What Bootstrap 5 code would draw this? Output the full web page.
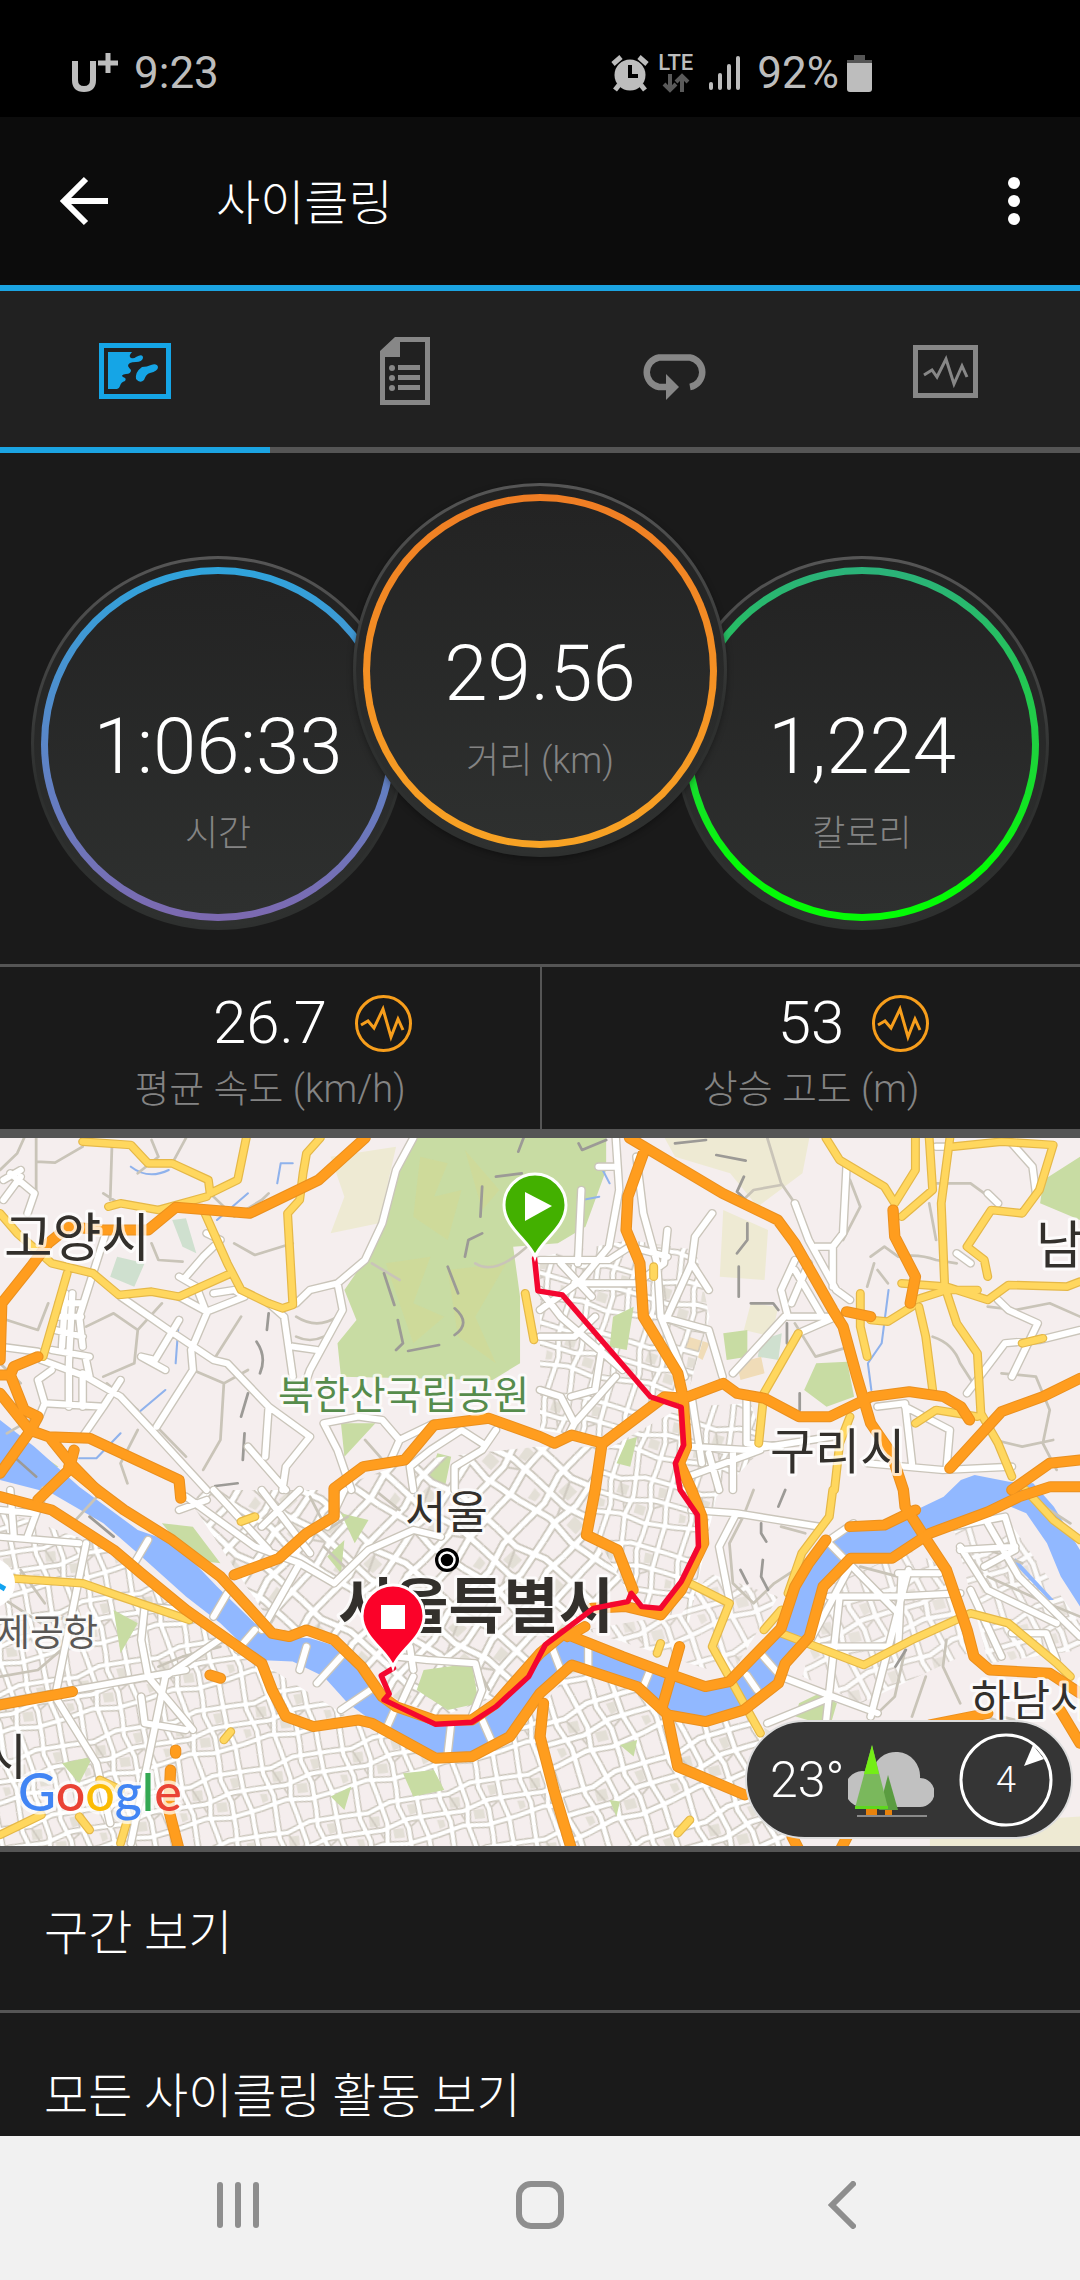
<!DOCTYPE html>
<html lang="ko">
<head>
<meta charset="utf-8">
<meta name="viewport" content="width=device-width, initial-scale=1">
<title>사이클링</title>
<link rel="stylesheet" href="https://cdn.jsdelivr.net/npm/bootstrap@5.3.0/dist/css/bootstrap.min.css">
<style>
  body { background: #1a1a1a; color: #fff; font-family: Roboto, "Noto Sans CJK KR", sans-serif; font-weight: 300; }
  svg { display: block; flex: none; }
  .phone-status { height: 117px; padding: 0 208px 14px 70px; background: #000; color: #bdbdbd; font-size: 44px; font-weight: 400; line-height: 1; }
  .lte-label { font-size: 22px; line-height: 20px; font-weight: 500; }
  .app-header { height: 174px; padding: 0 36px; background: #0c0c0c; border-bottom: 6px solid #1ba4e2; }
  .app-title { font-size: 48px; line-height: 60px; font-weight: 300; margin-left: 84px; padding-top: 6px; }
  .icon-btn { padding: 0; border: 0; background: none; color: inherit; display: flex; align-items: center; justify-content: center; }
  .tab-strip { background: #212121; }
  .tab-strip a { height: 162px; border-bottom: 6px solid #555; color: #878787; display: flex; align-items: center; justify-content: center; padding-top: 4px; }
  .tab-strip a.active { color: #15a5e6; border-color: #1ba4e2; }
  .dials { padding: 30px 0 34px; }
  .dial { width: 374px; height: 374px; border-radius: 50%; border: 3px solid transparent; flex: none; padding-top: 2px;
    background: linear-gradient(#212121, #2f3130) padding-box, linear-gradient(#565656, #2e302f 60%) border-box; }
  .dial-side { margin-top: 73px; }
  .dial-main { margin: 0 -52px; z-index: 1; box-shadow: 0 2px 6px rgba(0,0,0,.35); }
  .dial-ring { width: 354px; height: 354px; border-radius: 50%; border: 7px solid transparent; padding-top: 126px; }
  .ring-time { background: linear-gradient(#232323, #2e302f) padding-box, linear-gradient(#2fa4dc, #5a86c8 50%, #7d69b0) border-box; }
  .ring-distance { background: linear-gradient(#232323, #2e302f) padding-box, linear-gradient(#ef7d24, #f8a324) border-box; }
  .ring-energy { background: linear-gradient(#232323, #2e302f) padding-box, linear-gradient(#2bb27a, #1fd03f 50%, #04fb06 85%) border-box; }
  .dial-value { font-size: 78px; line-height: 94px; }
  .caption-text { font-size: 36px; line-height: 48px; color: #848484; }
  .dial .caption-text { margin-top: 16px; }
  .stat-cell .caption-text { font-size: 38px; margin-top: 6px; }
  .stat-row { border-top: 3px solid #555; border-bottom: 9px solid #555; }
  .stat-cell { height: 162px; padding-top: 20px; }
  .stat-cell + .stat-cell { border-left: 2px solid #555; }
  .stat-value { font-size: 60px; line-height: 72px; }
  .stat-icon svg { margin-left: 28px; }
  .map-box { border-bottom: 6px solid #555; }
  .map-box > svg { width: 100%; height: auto; }
  .map-label { font-family: "Noto Sans CJK KR", sans-serif; font-weight: 400; fill: #33302c; stroke: #fff; stroke-width: 6px; stroke-opacity: .75; paint-order: stroke; stroke-linejoin: round; }
  .brand-label { font-family: Lato, sans-serif; font-weight: 500; font-size: 52px; stroke: #fff; stroke-width: 7px; stroke-opacity: .7; paint-order: stroke; stroke-linejoin: round; }
  .line-set { fill: none; stroke-linecap: round; stroke-linejoin: round; }
  .weather-pill { right: 7px; bottom: 7px; height: 119px; width: 328px; border-radius: 60px; background: #353535; border: 2px solid #ddd; padding: 0 18px 0 23px; color: #fff; }
  .weather-temp { font-size: 50px; line-height: 60px; }
  .wind-dial { width: 94px; height: 94px; }
  .wind-dial span { font-size: 36px; line-height: 94px; }
  .more-item { height: 161px; padding: 6px 44px 0; background: #1a1a1a; color: #fff; border-bottom: 3px solid #555; font-size: 48px; }
  .more-item:last-child { border-bottom: 0; }
  .system-nav { height: 144px; background: #f1f1f1; color: #8e8e8e; }
  .system-nav .icon-btn { width: 28%; height: 100%; padding-bottom: 6px; }
</style>
</head>
<body>

<header>
  <div class="phone-status d-flex align-items-end justify-content-between">
    <div class="d-flex align-items-center gap-3 pb-2">
      <svg width="48" height="42" viewBox="0 0 48 42" fill="none" stroke="currentColor" stroke-width="6"><path d="M5 9v19q0 9 9 9t9-9V9"/><path d="M28 11h20M38 1v20" stroke-width="5"/></svg>
      <span>9:23</span>
    </div>
    <div class="d-flex align-items-center pb-2">
      <svg width="40" height="40" viewBox="0 0 40 40"><circle cx="20" cy="22" r="15.500" fill="currentColor"/><path d="M9 32l-4 5M31 32l4 5M3 11l8-7M37 11l-8-7" stroke="currentColor" stroke-width="5"/><path d="M20 12v11h8" stroke="#000" stroke-width="4" fill="none"/></svg>
      <div class="d-flex flex-column align-items-center mx-2">
        <span class="lte-label">LTE</span>
        <svg width="28" height="20" viewBox="0 0 28 20" fill="none" stroke="#5a5a5a" stroke-width="4"><path d="M8 1v16M2 11l6 6 6-6M20 19V3M14 9l6-6 6 6"/></svg>
      </div>
      <svg class="mx-2" width="32" height="36" viewBox="0 0 32 36" fill="currentColor"><rect y="27" width="4" height="8" rx="2"/><rect x="9" y="18" width="4" height="17" rx="2"/><rect x="18" y="9" width="4" height="26" rx="2"/><rect x="27" y="1" width="4" height="34" rx="2"/></svg>
      <span class="ms-2 me-2">92%</span>
      <svg width="25" height="37" viewBox="0 0 25 37"><path d="M7 0h11v5h7v5H0V5h7z" fill="#555"/><path d="M0 8h25v26q0 3-3 3H3q-3 0-3-3z" fill="currentColor"/></svg>
    </div>
  </div>

  <div class="app-header d-flex align-items-center">
    <button class="icon-btn" type="button" aria-label="뒤로">
      <svg width="96" height="60" viewBox="0 0 96 60" fill="none" stroke="currentColor" stroke-width="6"><path d="M72 30H28M50 8L28 30l22 22"/></svg>
    </button>
    <h1 class="app-title mb-0">사이클링</h1>
    <button class="icon-btn ms-auto" type="button" aria-label="메뉴">
      <svg width="60" height="60" viewBox="0 0 60 60" fill="currentColor"><circle cx="30" cy="12" r="6"/><circle cx="30" cy="30" r="6"/><circle cx="30" cy="48" r="6"/></svg>
    </button>
  </div>
</header>

<nav class="tab-strip row row-cols-4 g-0" aria-label="활동 보기">
  <a class="col active" href="#map" aria-label="지도"><svg width="72" height="56" viewBox="0 0 72 56"><rect x="2.500" y="2.500" width="67" height="51" fill="none" stroke="currentColor" stroke-width="5"/><path d="M9 9h24q-4 4-1 6 3 1 5-1 7-4 7 1-1 4-7 4-8 0-8 4 1 2 3 4 0 4-5 4-6 1-3 3 4 1 2 4-4 1-5 5-1 3-3 3H9zM37 36q-1-7 6-12 5 0 9-2 6-2 7 2 0 4-8 6-4 1-6 7-4 4-8-1z" fill="currentColor"/></svg></a>
  <a class="col" href="#stats" aria-label="통계"><svg width="50" height="68" viewBox="0 0 50 68" fill="currentColor"><path fill-rule="evenodd" d="M15 0h35v68H0V14zM20 5v15H5v43h40V5z"/><circle cx="12" cy="31" r="3"/><circle cx="12" cy="41" r="3"/><circle cx="12" cy="51" r="3"/><path d="M18 28h22v5H18zM18 38h22v5H18zM18 48h22v5H18z"/></svg></a>
  <a class="col" href="#laps" aria-label="랩"><svg width="68" height="58" viewBox="0 -12 68 58"><path d="M27 33H18A15 15 0 0 1 18 3.500H49A15 15 0 0 1 49 33" fill="none" stroke="currentColor" stroke-width="6.500"/><path d="M25 20l13 13-13 13z" fill="currentColor"/></svg></a>
  <a class="col" href="#charts" aria-label="차트"><svg width="65" height="53" viewBox="0 0 65 53" fill="none" stroke="currentColor"><rect x="2.500" y="2.500" width="60" height="48" stroke-width="5"/><path d="M11 30l8-5 5 7 9-18 8 25 8-18 5 11" stroke-width="3"/></svg></a>
</nav>

<main>
  <section class="dials d-flex justify-content-center text-center overflow-hidden">
    <div class="dial dial-side d-flex align-items-center justify-content-center">
      <div class="dial-ring ring-time"><div class="dial-value">1:06:33</div><div class="caption-text">시간</div></div>
    </div>
    <div class="dial dial-main d-flex align-items-center justify-content-center">
      <div class="dial-ring ring-distance"><div class="dial-value">29.56</div><div class="caption-text">거리 (km)</div></div>
    </div>
    <div class="dial dial-side d-flex align-items-center justify-content-center">
      <div class="dial-ring ring-energy"><div class="dial-value">1,224</div><div class="caption-text">칼로리</div></div>
    </div>
  </section>

  <section class="stat-row row row-cols-2 g-0 text-center">
    <div class="stat-cell col">
      <div class="row g-0 align-items-center">
        <div class="col"></div>
        <div class="col-auto stat-value">26.7</div>
        <div class="col stat-icon"><svg width="57" height="57" viewBox="0 0 57 57" fill="none" stroke="#f79e1c" stroke-width="3"><circle cx="28.500" cy="28.500" r="27"/><path d="M6 30l7-4 6 7 9-19 8 28 7-18 5 11"/></svg></div>
      </div>
      <div class="caption-text">평균 속도 (km/h)</div>
    </div>
    <div class="stat-cell col">
      <div class="row g-0 align-items-center">
        <div class="col"></div>
        <div class="col-auto stat-value">53</div>
        <div class="col stat-icon"><svg width="57" height="57" viewBox="0 0 57 57" fill="none" stroke="#f79e1c" stroke-width="3"><circle cx="28.500" cy="28.500" r="27"/><path d="M6 30l7-4 6 7 9-19 8 28 7-18 5 11"/></svg></div>
      </div>
      <div class="caption-text">상승 고도 (m)</div>
    </div>
  </section>

  <section class="map-box position-relative" id="map">
    <svg viewBox="0 0 1080 708" role="img" aria-label="서울 라이딩 경로 지도">
      <defs>
        <path id="tile-lines" d="M0 40L60 48 130 30 240 40M0 98L90 108 170 92 240 98M0 160L80 150 150 165 240 160M40 0L34 60 48 130 40 200M100 0L108 90 94 150 100 200M158 0L150 50 165 120 158 200M212 0L206 98 216 160 212 200"/>
        <pattern id="blocks" width="240" height="200" patternUnits="userSpaceOnUse"><g fill="none"><path d="M60 60l30 4-4 30-30-4zM120 112l30 4-2 28-30-4zM176 50l22 2-2 28-18 2zM10 116l20 4v20l-18 4z" fill="#e3dfd6"/><use href="#tile-lines" stroke="#c9c4b9" stroke-width="20"/><path d="M60 48L94 150M165 120L206 98" stroke="#cfcac0" stroke-width="5"/><use href="#tile-lines" stroke="#fff" stroke-width="12"/></g></pattern>
        <pattern id="blocks-a" href="#blocks" patternTransform="rotate(-14)"/>
        <pattern id="blocks-b" href="#blocks" patternTransform="rotate(-22) scale(1.100)"/>
        <pattern id="blocks-c" href="#blocks" patternTransform="rotate(38) scale(1.300)"/>
        <pattern id="blocks-d" href="#blocks" patternTransform="rotate(12)"/>
        <g id="lanes-gray">
          <path d="M105 24V180L80 260M0 120L50 70 70 24M105 95L160 98 240 50M325 50L320 210M440 30L460 80 400 130M540 24L500 100M610 190L680 260 760 210 780 190M680 340L740 375 850 340M440 340L460 390 530 395M360 230L300 190M20 570L110 600 140 520M250 590L330 550 400 600 390 700 300 740M400 600L470 520M560 720L650 760 720 720M650 760L640 930 590 1020M455 890L540 980M400 840L310 760M0 700L60 760M20 910L120 850M1080 400L1160 450M1380 400Q1440 440 1540 340M700 560L620 690M860 560Q920 600 980 560M860 620Q900 640 940 620M1060 930L1120 1000M400 900L350 1000 370 1060"/>
          <path transform="translate(1568 0)" d="M660 24L700 160 740 220M700 165L620 180 580 220M900 150L930 230 880 330M1130 220L1150 330M1040 380Q1100 370 1150 390L1210 400M960 380L1000 350 1040 380M970 400L950 470M980 420L1010 460M1150 160L1250 160 1330 220M740 580L800 680 900 650M1140 620Q1200 640 1220 700L1270 780M1340 730L1440 740 1480 840 1460 940 1500 1020M1300 530L1380 540 1480 520 1568 560M1320 930L1400 950 1490 930"/>
          <path transform="translate(0 1080)" d="M0 320L120 400 200 380M60 240L130 340M300 0L220 90M460 530L530 500 640 470M0 560L110 540 200 460M900 20L950 120 1010 80M1100 10L1160 60M1010 240L940 170M1230 500L1380 520 1420 600"/>
          <path transform="translate(1568 1080)" d="M590 80L550 160 560 280 620 340 680 280 740 240M620 0L590 80M700 110L770 130M930 230L1040 260M1060 480L1030 620 970 680M1180 450L1170 530 1220 640M1120 560L1080 680M1270 670L1400 720M1300 260L1450 330 1568 380M1280 170L1400 220M1450 40L1540 100M1340 680L1420 700"/>
        </g>
        <g id="lanes-white">
          <path d="M1200 24L1150 120 1110 280 1060 390 980 460 900 480 860 520M980 460L995 540 900 720 880 780M780 520L825 560 850 740M350 500L490 600 620 690 660 700 780 830 900 920M600 550L555 660 560 720 455 890M120 690L250 740 350 800 440 900 600 1080M30 130L100 190 80 250M10 150L60 120M10 210L60 140M310 300L270 430 230 560 240 650M0 650L110 665M520 570L450 690 410 680 480 720M940 880L1040 860 1110 870 1160 930 1260 880M940 880L980 960 1020 1080M720 950L830 1080M780 830L770 980M900 920L830 1010 820 1080M850 650L920 660M600 310L640 330 590 380 540 440M520 440L570 470 600 550M520 500L600 545 710 500M620 490L680 480 710 500M160 600L240 620M190 490L180 650M210 490L200 700M170 520H240M160 560H235M150 660L260 680M150 720L110 750 130 820 300 830 350 750M250 690L260 740M200 700V830M240 730V830M130 820L110 870M300 830L240 920M1160 930L1130 1000M1200 1080L1190 1010 1250 960 1340 900 1400 940M1320 1080V1010L1400 960 1440 900"/>
          <path transform="translate(1568 0)" d="M220 24L230 180 200 350 120 450 0 540M280 80L300 250 340 400 350 560 420 740M0 390H200L260 350 370 380M0 480L60 560 240 720M170 110H220M500 250L450 320 440 400 370 560M370 300L360 400 280 460 100 460M440 400L490 480M350 560L490 600 530 740M740 220L780 330 860 480 900 510M890 110L880 310 850 350 800 350M850 350V470M740 390L700 480 720 560 850 560M710 560L560 730M860 560L750 610M740 420L820 560M780 400L730 520M1150 50H1190M1370 40L1430 110 1440 190M1250 400L1210 370M1330 510L1360 540 1445 580 1370 740M1568 600L1450 630 1350 640 1240 790M1300 190L1330 220M120 180L110 400M60 400L150 500M0 620H100L160 560M0 780L60 800 100 880M220 740L100 880 80 920M180 650L160 780 90 800M440 800L470 1000M600 800V940L700 950M440 950L600 960 850 920M430 1040L640 960M490 970L520 1080M560 960V1080M980 830L1060 820 1080 1000M1060 830L1190 900 1180 1020M950 1000L1170 1020 1370 1010"/>
          <path transform="translate(0 1080)" d="M540 20L740 170 870 220 970 280M620 0L780 180M760 0L900 190M600 30L520 60M430 150L390 220M660 310L620 380M740 420L690 480M890 470L870 540M990 500L920 580M1090 590L990 660M1150 650L1120 720M1310 700L1300 790M1400 690L1430 760M970 280L1070 180 1200 120 1280 140M870 220L760 420M760 110L870 0M1000 0L950 110M1150 500L1240 510 1380 520 1400 600 1370 680M1200 560L1160 650M1200 540L1190 470M410 620L420 700 540 720M250 160L160 620 280 820 320 1000M0 140L230 160M130 0L80 140M30 0L40 140M0 60L100 70M410 450L420 350 540 360M410 450L430 560 560 720M540 540L430 560 0 640M650 440L480 560 380 1060"/>
          <path transform="translate(1568 1080)" d="M30 460L60 540M140 470V540M320 540L300 590M600 555L630 600M640 490L700 560M830 150L1040 370M440 60L570 70 810 110M570 70L520 170 550 330M840 150L910 100M840 320L1040 320 1220 310M900 230L780 460M1050 250L1040 470M1040 250L1160 250M1070 240L960 680M820 470H1010M870 320L830 700M1220 170L1300 300 1500 400M1200 110L1350 80 1380 180 1290 230M1300 100L1390 260 1568 440M1220 180L1380 170M1370 430L1470 430 1500 510M1250 300L1340 500M700 560L850 620 980 670M660 700L850 620"/>
        </g>
        <g id="lanes-yellow">
          <path d="M240 35L380 45 430 100 500 100 605 150 610 190 690 150 715 24M930 24L890 70 880 130 870 210 835 250 850 520M315 230L350 220 460 240 600 200M0 250L50 310 150 400 270 430 345 495 440 485 520 500 660 435M595 250L660 400 700 480 780 520 820 535 850 525M195 430L125 680M1525 490L1550 630"/>
          <path transform="translate(1568 0)" d="M830 24L870 90 1000 170 1030 220 1090 120V24M1130 24L1140 180 1050 260M1190 24L1165 220 1175 470 1210 580 1270 670 1280 850 1330 940 1370 1040M1200 50L1340 35 1490 45 1450 180 1400 250 1310 240 1240 350 1290 390 1300 440M1050 460L1180 470 1300 510 1360 465 1530 470 1568 455M1090 510L1180 480 1270 480M1100 530L1120 620 1140 780M930 490V590L950 680M960 570L1010 575 1080 530M750 610L650 790 635 940M900 860L870 940 855 1080M1090 880L1150 840 1270 860M1400 640L1460 625M330 410V440"/>
          <path transform="translate(0 1080)" d="M30 265L240 280 350 320 550 390M0 1035L120 975M350 1060L370 990M230 980L260 1020M650 750L670 725M700 95L740 80M290 870L350 900"/>
          <path transform="translate(1568 1080)" d="M850 0L840 80 760 190 720 310M435 280L550 340 500 470 640 730M650 420L700 360M700 430L940 525 1080 450 1250 370 1360 400 1500 520 1540 560M1410 0L1490 90 1568 150M400 1030L435 990M340 490L350 460"/>
        </g>
        <g id="lanes-orange">
          <path d="M1060 24L925 150 725 250 510 232 430 300 300 300 200 290 140 340 90 410 5 520 0 690M110 680L40 710 30 735 0 735M30 735L70 840 110 860 90 900M0 790L85 900 140 920 260 925 520 1050 525 1105M90 900L0 1030M150 930L205 1000 290 1090M215 960L200 1020 110 1110M680 1335L810 1285 890 1210 970 1160V1075L1055 1010 1175 990 1260 885 1420 865 1568 920 1610 940 1660 915 1750 940 1930 800 1985 805 2100 760 2140 790 2220 805 2320 860 2410 860 2530 800 2640 785 2740 800 2790 830 2815 870"/>
          <path transform="translate(1568 0)" d="M260 24L530 190 690 270 740 340 850 540 880 590 920 740 960 880 1020 970 1055 1080 1060 1130 1110 1210 1180 1320 1240 1500 1260 1580 1305 1620 1480 1630 1568 1690M300 70L255 200 250 300 290 400 300 560 400 730 415 800 425 950 405 1000 440 1080 470 1160 475 1240 410 1380 350 1455 250 1430 150 1435M180 940L160 1080 135 1215 225 1260 270 1380M1025 240L1030 320 1090 440 1075 520M890 545L960 560M1190 1015L1340 845 1460 800 1568 745"/>
          <path d="M3136 1070L3050 1070 2960 1100 2870 1145 2700 1210 2590 1285 2470 1285 2390 1370 2350 1520 2280 1600 2260 1660 2160 1740 2050 1775 1940 1755 1850 1670 1660 1605 1568 1690 1480 1820 1370 1880 1265 1885 1080 1780 1040 1770 910 1790 830 1760 790 1680 760 1600 650 1520 540 1440 410 1330 330 1260 150 1140 0 1100"/>
          <path d="M3136 990L3048 1000 2938 1080M200 1010L270 1070 360 1140 500 1230 640 1340 720 1430 790 1510 840 1520 890 1500 970 1530 1050 1610 1110 1700 1150 1730 1260 1770 1370 1770 1440 1720 1568 1570 1638 1510 1808 1580 1938 1630 2048 1670 2118 1655 2188 1580 2268 1495 2308 1370 2348 1300 2398 1230M2468 1190L2568 1185 2658 1140M1973 1550L1923 1730M1938 1760L1968 1910 2163 1995M1578 1720L1568 1820 1608 1980 1660 2160M2868 1750L2700 1785M3078 1740L3136 1840M1698 1490L1648 1520M0 1725L210 1685M610 1635L640 1645M510 1860V1870M495 1920L490 2040 520 2160M2300 2120L2320 2160M2460 2120L2440 2160"/>
        </g>
      </defs>

      <rect width="1080" height="708" fill="#f5eeee"/>
      <!-- map geometry is digitised on a 3136 x 2190 grid -->
      <g transform="translate(0 -8) scale(.3444 .3333)">
        <g fill="#eeead3">
          <path d="M960 80L1150 50 1100 280 960 310 1000 200zM1930 24H2350L2330 130 2200 230 2120 130 1960 80zM2100 240L2230 300 2220 450 2090 440zM2180 520L2260 530 2240 620 2160 600z"/>
          <path d="M2700 2090L3136 2060V2160H2700z"/>
        </g>
        <path d="M1190 24H1760V120L1700 290 1620 340 1490 350 1510 500V700L1430 750 990 740 980 640 1035 570 1000 480 1060 390 1110 280z" fill="#c8dca3"/>
        <path d="M1220 80L1300 100 1260 200 1340 180 1300 330 1200 260zM1120 400L1250 380 1200 520 1290 560 1200 640zM1350 60L1450 180 1400 240zM1300 420L1470 400 1380 560 1440 700 1330 620z" fill="#d3d993" opacity=".55"/>
        <g fill="#c8dca3">
          <path d="M990 880L1090 880 1000 980zM1270 970L1310 980 1290 1080 1240 1060zM100 960L170 1010 120 1020zM3136 80L3030 150 3020 220 3136 270zM2100 610L2170 600 2170 680 2110 690zM2370 700L2460 695 2480 800 2400 830 2335 780z"/>
        </g>
        <path d="M340 380L420 400 390 470 320 440zM500 270L540 265 570 370 530 350zM2210 630L2270 610 2260 690 2200 680z" fill="#cfe0cf"/>
        <path d="M2140 700L2210 680 2220 730 2150 750zM2000 620L2060 640 2040 690 1990 660z" fill="#f0dcb8"/>

        <path d="M0 1140L330 1260 760 1600 1040 1780 1265 1885 1480 1830 1568 1700 1600 1980 1660 2170H0z" fill="url(#blocks-a)"/>
        <path d="M1580 1720L1660 1620 1850 1680 1950 1770 2160 1750 2270 1830 2280 2160H1660L1600 1980z" fill="url(#blocks-b)"/>
        <path d="M530 1080L960 1080 1200 990 1560 950 1750 950 1700 1200 1830 1380 1640 1500 1440 1700 1280 1760 1110 1690 980 1520 800 1500z" fill="url(#blocks-c)"/>
        <path d="M1568 380L1830 330 2020 360 2060 560 2000 780 1930 800 1750 930 1568 900zM1760 960L1980 830 2180 820 2220 950 2080 1100 2000 1480 1830 1400 1720 1200z" fill="url(#blocks-d)"/>
        <path d="M2060 1330L2260 1400 2120 1640 1700 1500 1980 1450zM2400 1370L2640 1260 2760 1320 2830 1560 2500 1720 2330 1640zM2770 1200L2920 1160 3136 1480 3136 1560 2870 1600z" fill="url(#blocks-b)" opacity=".8"/>
        <path d="M1230 1620L1370 1600 1390 1720 1300 1740 1210 1680zM990 1150L1070 1170 1030 1240zM950 1280L1000 1230 990 1330zM330 1440L400 1480 350 1570zM470 1180L560 1190 640 1300 560 1290zM1170 1930L1260 1920 1290 1980 1200 2000zM180 1900L270 1880 230 1960zM2320 1720L2380 1690 2430 1720 2410 1790 2310 1760zM1800 1845L1850 1830 1840 1880zM960 2000L1020 1970 1000 2040zM1770 2010L1800 2015 1790 2060zM1780 560L1840 530 1820 660 1770 650zM1820 930L1850 920 1830 1010 1790 1000z" fill="#c8dca3"/>

        <path d="M0 870L100 950 230 1070 400 1200 510 1240 630 1370 740 1480 800 1520 900 1525 980 1550 1060 1620 1110 1700 1260 1775 1370 1770 1568 1590 1640 1520 1830 1590 2060 1670 2140 1640 2270 1490 2320 1340 2430 1200 2470 1200 2640 1150 2740 1100 2790 1050 2830 1035 2930 1055 3000 1060 3060 1130 3136 1260V1430L3080 1340 3040 1240 2980 1150 2910 1120 2850 1150 2700 1210 2590 1280 2470 1280 2390 1360 2340 1530 2280 1600 2250 1660 2150 1740 2050 1770 1940 1750 1850 1670 1660 1610 1568 1680 1480 1820 1370 1870 1270 1870 1090 1780 1010 1720 940 1640 850 1595 750 1590 640 1480 540 1400 400 1270 300 1180 150 1090 0 1050z" fill="#91b8ff"/>
        <path d="M2948 1285L3060 1410 3045 1410 2940 1295z" fill="#91b8ff"/>

        <g class="line-set">
          <path d="M380 110Q430 150 490 120M805 160L815 100 850 100M630 270L720 190M510 700L520 560M400 850L480 780M230 985H280L350 910M2580 480L2560 640 2520 700 2530 780M1690 210L1740 200M1750 120L1770 160" stroke="#8fb2ec" stroke-width="6"/>
          <use href="#lanes-gray" stroke="#c9c4b8" stroke-width="8"/>
          <path d="M1400 170L1395 260M1440 140L1515 130M1400 310L1360 330 1350 380M1300 410L1330 490M1115 430L1145 525M1155 570L1170 640 1150 660M1185 663L1275 645M1320 535Q1370 580 1320 615M780 550L775 600M745 635Q775 680 755 730M720 790L700 860M710 910L705 990M625 1068L690 1060M1520 24L1505 65M1680 40L1690 60 1760 30M1960 40L2050 30M2080 75L2165 92M2160 140L2140 185 2165 210M2170 280V330L2140 370M2145 410L2145 500M2180 520H2245L2260 540M2285 580V640M2322 790V840M2280 1080L2260 1130M2210 1180V1210L2225 1235M2215 1290L2210 1340 2230 1380M2150 1320L2170 1360M2630 1560L2600 1610M40 980L105 1040M260 1160L330 1220" stroke="#9c9a96" stroke-width="8"/>
          <use href="#lanes-white" stroke="#cac5ba" stroke-width="26"/>
          <use href="#lanes-white" stroke="#fff" stroke-width="18"/>
          <use href="#lanes-yellow" stroke="#e5b848" stroke-width="26"/>
          <use href="#lanes-yellow" stroke="#ffd75e" stroke-width="19"/>
          <use href="#lanes-orange" stroke="#ea901f" stroke-width="33"/>
          <use href="#lanes-orange" stroke="#ff9d1e" stroke-width="27"/>
        </g>
      </g>

      <circle cx="-10" cy="445" r="25" fill="#fff"/><path d="M-4 446l9 5" stroke="#12a3f0" stroke-width="5"/>
      <g class="map-label">
        <text x="4" y="119" font-size="53">고양시</text>
        <text x="1036" y="126" font-size="52">남</text>
        <text x="278" y="271" font-size="39" style="fill:#568c4c">북한산국립공원</text>
        <text x="770" y="331" font-size="49">구리시</text>
        <text x="405" y="391" font-size="45">서울</text>
        <text x="338" y="490" font-size="60" font-weight="700">서울특별시</text>
        <text x="-4" y="508" font-size="37" style="fill:#5a5856">제공항</text>
        <text x="-19" y="637" font-size="50">시</text>
        <text x="971" y="578" font-size="43">하남시</text>
      </g>
      <circle cx="447" cy="422" r="12"/><circle cx="447" cy="422" r="7.500" fill="none" stroke="#fff" stroke-width="2.500"/>

      <path class="line-set" transform="translate(0 -8) scale(.3444 .3333)" stroke="#f4062f" stroke-width="16" d="M1552 385L1562 483 1633 495 1888 800 1978 832 1985 945 1961 1000 1975 1080 2025 1155 2028 1250 1978 1355 1918 1435 1863 1430 1833 1390 1823 1415 1723 1435 1583 1545 1535 1640 1440 1730 1370 1777 1265 1783 1115 1710 1130 1692 1107 1637 1142 1615"/>

      <g stroke="#fff" stroke-width="3">
        <path d="M535 119C530 103 504 90 504 67a31 31 0 0 1 62 0C566 90 540 103 535 119z" fill="#43b000"/>
        <path d="M393 529C388 513 362 500 362 478a31 31 0 0 1 62 0C424 500 398 513 393 529z" fill="#fb0229"/>
      </g>
      <path d="M525 54l27 14-27 15z" fill="#fff"/><path d="M381 467h24v24h-24z" fill="#fff"/>

      <text class="brand-label" x="18" y="673"><tspan fill="#4285f4">G</tspan><tspan fill="#ea4335">o</tspan><tspan fill="#fbbc05">o</tspan><tspan fill="#4285f4">g</tspan><tspan fill="#34a853">l</tspan><tspan fill="#ea4335">e</tspan></text>
    </svg>

    <button type="button" class="weather-pill position-absolute d-flex align-items-center gap-1" aria-label="날씨">
      <span class="weather-temp fw-light">23°</span>
      <svg width="86" height="74" viewBox="0 0 86 74">
        <path d="M16 64a18 18 0 0 1-2-36q6 0 10 3a24 24 0 0 1 48 4 14 14 0 0 1 0 29z" fill="#c1c1c1"/>
        <path d="M18 64h11v9H18zM37 66h7v7h-7z" fill="#e8820c"/>
        <path d="M40 32L50 67H31z" fill="#5a9c40"/><path d="M24 2L40 65H7z" fill="#7ab85c"/><path d="M24 2l7 29H16z" fill="#74ee16"/><path d="M7 63h33v3H7z" fill="#5ed81e"/>
        <path d="M9 73h70" stroke="#8a8a8a" stroke-width="2"/>
      </svg>
      <span class="wind-dial position-relative d-block text-center ms-auto">
        <svg class="position-absolute top-0 start-0" width="94" height="94" viewBox="0 0 94 94"><circle cx="47" cy="47" r="45" fill="none" stroke="#fff" stroke-width="3"/><path d="M74 12l11 14-20 7z" fill="#fff"/></svg>
        <span class="fw-light">4</span>
      </span>
    </button>
  </section>

  <div class="d-flex flex-column">
    <a class="more-item d-flex align-items-center text-decoration-none" href="#segments">구간 보기</a>
    <a class="more-item d-flex align-items-center text-decoration-none" href="#activities">모든 사이클링 활동 보기</a>
  </div>
</main>

<nav class="system-nav fixed-bottom d-flex justify-content-center align-items-center" aria-label="시스템 탐색">
  <button class="icon-btn" type="button" aria-label="최근 앱"><svg width="42" height="46" viewBox="0 0 42 46" fill="currentColor"><rect width="6" height="46" rx="3"/><rect x="18" width="6" height="46" rx="3"/><rect x="36" width="6" height="46" rx="3"/></svg></button>
  <button class="icon-btn" type="button" aria-label="홈"><svg width="48" height="48" viewBox="0 0 48 48"><rect x="3" y="3" width="42" height="42" rx="12" fill="none" stroke="currentColor" stroke-width="6"/></svg></button>
  <button class="icon-btn" type="button" aria-label="뒤로 가기"><svg width="28" height="48" viewBox="0 0 28 48"><path d="M25 3L4 24l21 21" fill="none" stroke="currentColor" stroke-width="6" stroke-linecap="round"/></svg></button>
</nav>

<script src="https://cdn.jsdelivr.net/npm/bootstrap@5.3.0/dist/js/bootstrap.bundle.min.js"></script>
</body>
</html>
